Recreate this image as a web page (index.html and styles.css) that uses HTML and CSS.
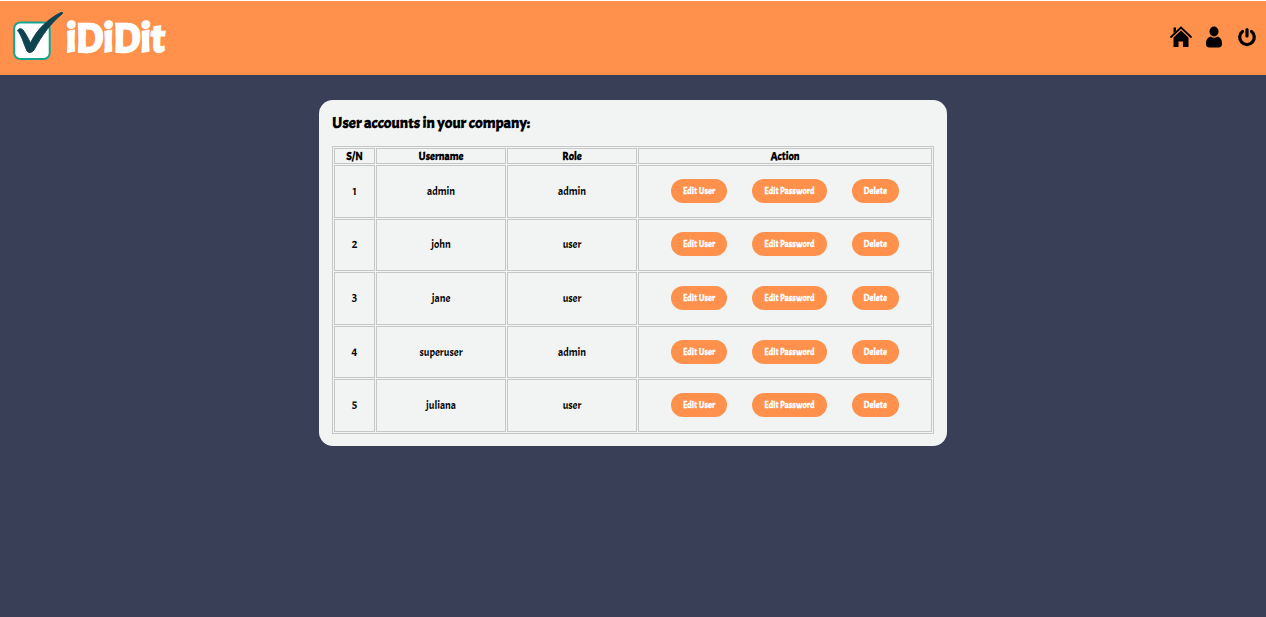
FILE: index.html
```html
<!DOCTYPE html>
<html lang="en">
<head>
<meta charset="utf-8">
<title>iDiDit</title>
<link rel="stylesheet" href="styles.css">
</head>
<body>
<header class="topbar">
  <a class="brand" href="#">
    <svg class="brand-mark" viewBox="0 0 51 50" aria-hidden="true">
      <rect x="2.200" y="10.500" width="35.500" height="36.500" rx="6" fill="#fff" stroke="#12a594" stroke-width="2"/>
      <path d="M5.500 18.500C7 16.500 9 16 11 18C14 22 16 26 18.500 31C25 17 37 6 50 0Q51 1 50 2C39 11 30 23 22 38Q18 42.500 15 39C11 30 10 24 5.500 18.500Z" fill="#0d4450" stroke="#0d4450" stroke-width="1" stroke-linejoin="round"/>
    </svg>
    <span class="brand-name">iDiDit</span>
  </a>
  <nav class="nav">
    <a class="nav-link" href="#" aria-label="Home">
      <svg class="icon" viewBox="0 0 22 22" aria-hidden="true">
        <path d="M3.500 1.500H6V5L3.500 7Z"/>
        <path d="M1 11L11 1.500L21 11" fill="none" stroke="#000" stroke-width="1.800" stroke-linecap="round"/>
        <path d="M3.500 11.500L11 4.500L18.500 11.500V21H13V15.500H8.500V21H3.500Z"/>
      </svg>
    </a>
    <a class="nav-link" href="#" aria-label="Account">
      <svg class="icon" viewBox="0 0 22 22" aria-hidden="true">
        <ellipse cx="11" cy="5.500" rx="4.500" ry="5"/>
        <path d="M3 18C3 14 4 12 7.500 10.500Q11 13 14.500 10.500C18 12 19 14 19 18Q19 21 16 21.500H6Q3 21 3 18Z"/>
      </svg>
    </a>
    <a class="nav-link" href="#" aria-label="Log out">
      <svg class="icon" viewBox="0 0 22 22" aria-hidden="true">
        <path d="M6.500 5.500A7.300 7.300 0 1 0 15.500 5.500M11 3.500V10" fill="none" stroke="#000" stroke-width="3.200" stroke-linecap="round"/>
      </svg>
    </a>
  </nav>
</header>
<main class="card">
  <h1 class="title">User accounts in your company:</h1>
  <table class="users">
    <thead>
      <tr><th class="col-sn">S/N</th><th class="col-text">Username</th><th class="col-text">Role</th><th>Action</th></tr>
    </thead>
    <tbody>
      <tr><td>1</td><td>admin</td><td>admin</td><td><div class="actions"><button class="btn">Edit User</button><button class="btn">Edit Password</button><button class="btn">Delete</button></div></td></tr>
      <tr><td>2</td><td>john</td><td>user</td><td><div class="actions"><button class="btn">Edit User</button><button class="btn">Edit Password</button><button class="btn">Delete</button></div></td></tr>
      <tr><td>3</td><td>jane</td><td>user</td><td><div class="actions"><button class="btn">Edit User</button><button class="btn">Edit Password</button><button class="btn">Delete</button></div></td></tr>
      <tr><td>4</td><td>superuser</td><td>admin</td><td><div class="actions"><button class="btn">Edit User</button><button class="btn">Edit Password</button><button class="btn">Delete</button></div></td></tr>
      <tr><td>5</td><td>juliana</td><td>user</td><td><div class="actions"><button class="btn">Edit User</button><button class="btn">Edit Password</button><button class="btn">Delete</button></div></td></tr>
    </tbody>
  </table>
</main>
</body>
</html>
```
FILE: styles.css
```css
* { box-sizing: border-box; }
body {
  margin: 0;
  background: #3a3f58;
  color: #000;
  font-family: Acme, Lato, sans-serif;
}
.topbar {
  display: flex;
  align-items: center;
  justify-content: space-between;
  height: 75px;
  padding: 0 8px 2px 12px;
  border-top: 1px solid #fff;
  background: #ff914d;
}
.brand {
  display: flex;
  align-items: center;
  gap: 3px;
  color: #fff;
  text-decoration: none;
}
.brand-mark { width: 51px; height: 50px; }
.brand-name {
  padding-top: 3px;
  font-size: 41px;
  font-weight: 700;
  line-height: 48px;
  -webkit-text-stroke: 1px #fff;
}
.nav { display: flex; gap: 11px; }
.nav-link { display: flex; }
.icon { width: 22px; height: 22px; fill: #000; }
.card {
  width: 49.6%;
  margin: 25px auto 0;
  padding: 13px 13px 12px;
  border-radius: 14px;
  background: #f2f4f4;
}
.title {
  margin: 0 0 12px;
  font-size: 16px;
  line-height: 21px;
}
.users {
  width: 100%;
  height: 288px;
  table-layout: fixed;
  border: 1px solid #c6c8c8;
  border-spacing: 1px;
  font-size: 11px;
  text-align: center;
}
.users th, .users td {
  padding: 0;
  border: 1px solid #c6c8c8;
}
.users th { height: 16px; line-height: 14px; }
.users td { height: 52px; padding-bottom: 1px; }
.col-sn { width: 41px; }
.col-text { width: 130px; }
.actions {
  display: flex;
  justify-content: center;
  gap: 25px;
}
.btn {
  height: 24px;
  padding: 0 12px;
  border: 0;
  border-radius: 12px;
  background: #ff914d;
  color: #fff;
  font-family: inherit;
  font-size: 9px;
  font-weight: 700;
}
```
